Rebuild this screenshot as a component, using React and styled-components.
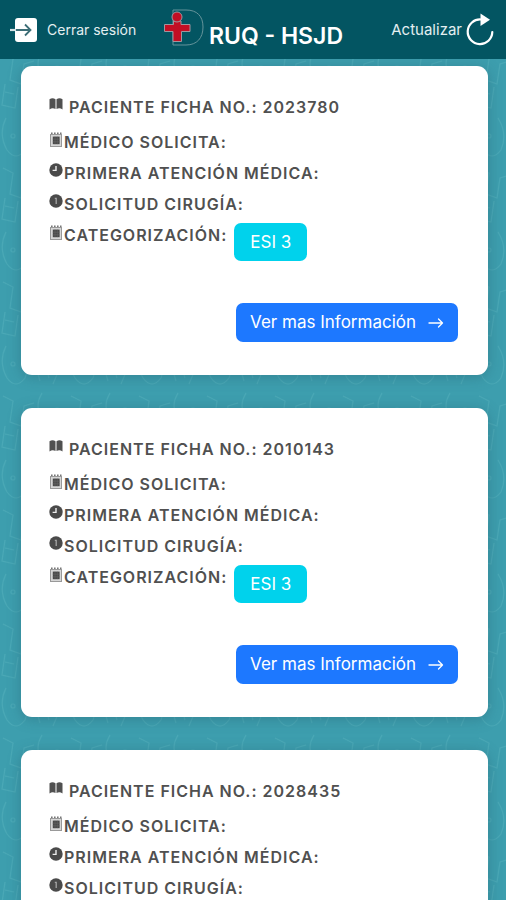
import styled, { createGlobalStyle } from 'styled-components';

const GlobalStyle = createGlobalStyle`
    * {
        box-sizing: border-box;
    }
    body {
        margin: 0;
        background: #3d9eae;
        font-family: Inter, 'Liberation Sans', sans-serif;
        -webkit-font-smoothing: antialiased;
    }
`

const patients = [
    { ficha: '2023780', esi: 'ESI 3' },
    { ficha: '2010143', esi: 'ESI 3' },
    { ficha: '2028435', esi: 'ESI 3' },
];

const BookIcon = () => (
    <svg width="14" height="14" viewBox="0 0 14 14" fill="#505050" aria-hidden="true">
        <path d="M0.5 2.2Q3.5 0.2 6.5 2.2V12Q3.5 10.2 0.5 12.4Z" />
        <path d="M7.5 2.2Q10.5 0.2 13.5 2.2V12.4Q10.5 10.2 7.5 12Z" />
    </svg>
);

const NoteIcon = () => (
    <svg width="14" height="16" viewBox="0 0 14 16" aria-hidden="true">
        <rect x="1.5" y="2.5" width="11" height="12" fill="#d6d6d6" stroke="#999" />
        <path d="M2 1.2H12.5" stroke="#777" strokeWidth="1.6" strokeDasharray="1.6 1.4" />
        <rect x="3.8" y="4.6" width="6.8" height="7.6" fill="#484848" />
        <path d="M3.8 7.2H10.6M3.8 9.8H10.6M6 4.6V12.2M8.3 4.6V12.2" stroke="#666" strokeWidth="0.6" />
    </svg>
);

const ClockIcon = () => (
    <svg width="14" height="14" viewBox="0 0 14 14" aria-hidden="true">
        <circle cx="7" cy="7" r="6.7" fill="#4a4a4a" />
        <path d="M7 3V7.4H3.6" fill="none" stroke="#eee" strokeWidth="1.4" />
    </svg>
);

const InfoIcon = () => (
    <svg width="14" height="14" viewBox="0 0 14 14" aria-hidden="true">
        <circle cx="7" cy="7" r="6.7" fill="#4a4a4a" />
        <path d="M5.8 4.4H7.2V10" fill="none" stroke="#a5a5a5" strokeWidth="1.3" />
    </svg>
);

const ArrowIcon = () => (
    <svg width="16" height="12" viewBox="0 0 16 12" fill="none" stroke="#fff" strokeWidth="1.3" strokeLinecap="round" strokeLinejoin="round" aria-hidden="true">
        <path d="M1 6H14.5M10.5 2L14.5 6L10.5 10" />
    </svg>
);

const LogoutIcon = () => (
    <svg width="28" height="26" viewBox="1 0 28 26" fill="none" aria-hidden="true">
        <rect x="6" y="1" width="22" height="24" rx="3" fill="#fff" />
        <path d="M0 13H7" stroke="#d5e4e7" strokeWidth="2.2" />
        <path d="M7 13H21M16 7.5L21.5 13L16 18.5" stroke="#3c6d76" strokeWidth="1.8" />
    </svg>
);

const RefreshIcon = () => (
    <svg width="30" height="34" viewBox="0 0 30 34" fill="none" aria-hidden="true">
        <path d="M15 6.5A12.3 12.3 0 1 0 26.3 19" stroke="#fff" strokeWidth="2.2" strokeLinecap="round" />
        <path d="M14.5 0.5L24 6.8L14.5 13Z" fill="#fff" />
    </svg>
);

const Logo = () => (
    <svg width="42" height="38" viewBox="0 0 42 38" fill="none" aria-hidden="true">
        <path d="M10 2V37H23C34 37 40 30 40 19C40 8 34 2 23 2Z" stroke="#65949b" strokeWidth="1" />
        <g fill="#c20f24" stroke="#a0969e" strokeWidth="1">
            <path d="M1.5 16.5H10.5V13H18V16.5H27V23.5H18.5V33.5H10V23.5H1.5Z" />
            <circle cx="14" cy="9" r="5" />
        </g>
    </svg>
);

// faint medical doodles behind the cards
const Doodles = () => (
    <Backdrop aria-hidden="true">
        <defs>
            <pattern id="doodles" width="68" height="114" patternUnits="userSpaceOnUse">
                <g fill="none" stroke="#59b4be" strokeWidth="1.2" opacity="0.45">
                    <path d="M6 4Q-2 20 7 36Q16 48 25 36Q32 20 22 4" />
                    <path d="M3 54L13 59L10 80L21 84L24 64L34 61" />
                    <path d="M5 84L2 105L15 108L18 87M5 92L14 94" />
                    <path d="M40 8Q34 24 40 39M49 4Q43 20 49 36M58 8L61 23L53 42" />
                    <circle cx="13" cy="22" r="2" />
                    <circle cx="57" cy="69" r="3" />
                    <path d="M42 51Q34 64 42 77L49 82Q57 93 49 105" />
                    <path d="M55 85H65M55 89H65M53 94Q60 102 66 94" />
                </g>
            </pattern>
        </defs>
        <rect width="100%" height="100%" fill="url(#doodles)" />
    </Backdrop>
);

const PatientCard = ({ ficha, esi }) => (
    <Card>
        <CardTitle>
            <BookIcon />
            PACIENTE FICHA NO.: {ficha}
        </CardTitle>
        <Row><NoteIcon />MÉDICO SOLICITA:</Row>
        <Row><ClockIcon />PRIMERA ATENCIÓN MÉDICA:</Row>
        <Row><InfoIcon />SOLICITUD CIRUGÍA:</Row>
        <Row>
            <NoteIcon />CATEGORIZACIÓN:
            <Badge type="button">{esi}</Badge>
        </Row>
        <CardFooter>
            <MoreButton type="button">
                Ver mas Información
                <ArrowIcon />
            </MoreButton>
        </CardFooter>
    </Card>
);

const App = () => {
    return (
        <Page>
            <GlobalStyle />
            <Doodles />
            <Header>
                <HeaderButton type="button" $gap={9} $size={14}>
                    <LogoutIcon />
                    Cerrar sesión
                </HeaderButton>
                <Brand>
                    <Logo />
                    <BrandName>RUQ - HSJD</BrandName>
                </Brand>
                <HeaderButton type="button" $gap={4} $size={15} $end>
                    Actualizar
                    <RefreshIcon />
                </HeaderButton>
            </Header>
            <CardList>
                {patients.map((p) => (
                    <PatientCard key={p.ficha} ficha={p.ficha} esi={p.esi} />
                ))}
            </CardList>
        </Page>
    )
}

export default App;


//styled-components

const Page = styled.div`
    position: relative;
    min-height: 100vh;
`

const Backdrop = styled.svg`
    position: absolute;
    inset: 0;
    z-index: -1;
    width: 100%;
    height: 100%;
`

const Header = styled.header`
    position: sticky;
    top: 0;
    z-index: 1;
    display: grid;
    grid-template-columns: 1fr auto 1fr;
    align-items: center;
    height: 59px;
    padding: 0 10px;
    background: #035562;
    color: #fff;
`

const HeaderButton = styled.button`
    display: flex;
    align-items: center;
    justify-self: ${({ $end }) => $end ? 'end' : 'start'};
    gap: ${({ $gap }) => $gap}px;
    padding: 0;
    border: 0;
    background: none;
    color: #e4eff1;
    font: 400 ${({ $size }) => $size}px/20px Inter, 'Liberation Sans', sans-serif;
    cursor: pointer;
`

const Brand = styled.div`
    display: flex;
    align-items: flex-start;
    gap: 4px;
`

const BrandName = styled.h1`
    margin: 0;
    padding-top: 12px;
    font-size: 23px;
    line-height: 32px;
    font-weight: 600;
`

const CardList = styled.main`
    display: flex;
    flex-direction: column;
    gap: 33px;
    padding: 7px 18px 33px 21px;
`

const Card = styled.article`
    padding: 26px 30px 33px 28px;
    border-radius: 11px;
    background: #fff;
    box-shadow: 0 2px 14px rgba(40, 100, 115, 0.45);
`

const CardTitle = styled.h2`
    display: flex;
    align-items: flex-start;
    gap: 6px;
    margin: 0 0 4px;
    color: #505050;
    font-size: 16px;
    line-height: 31px;
    font-weight: 600;
    letter-spacing: 1px;

    svg {
        margin-top: 5px;
    }
`

const Row = styled.div`
    display: flex;
    align-items: flex-start;
    gap: 1px;
    color: #505050;
    font-size: 16px;
    line-height: 31px;
    font-weight: 600;
    letter-spacing: 1px;

    svg {
        margin-top: 5px;
    }
`

const Badge = styled.button`
    margin: 3px 0 0 6px;
    padding: 0 16px;
    border: 0;
    border-radius: 7px;
    background: #00d2ec;
    color: #fff;
    font: 400 17px/38px Inter, 'Liberation Sans', sans-serif;
    cursor: pointer;
`

const CardFooter = styled.div`
    display: flex;
    justify-content: flex-end;
    margin-top: 42px;
`

const MoreButton = styled.button`
    display: flex;
    align-items: center;
    gap: 12px;
    padding: 0 14px;
    border: 0;
    border-radius: 7px;
    background: #1d78ff;
    color: #fff;
    font: 400 17px/39px Inter, 'Liberation Sans', sans-serif;
    cursor: pointer;
`
